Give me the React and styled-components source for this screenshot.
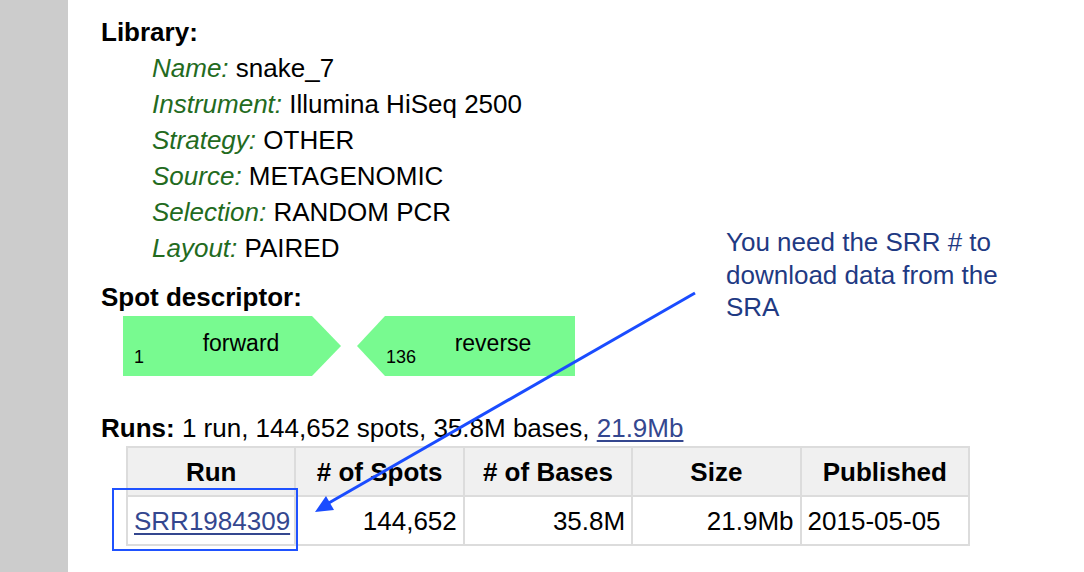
import React from 'react';
import styled, { createGlobalStyle } from 'styled-components';

const GlobalStyle = createGlobalStyle`
  html, body {
    margin: 0;
    padding: 0;
    background: #fff;
  }
  body {
    font-family: 'Liberation Sans', Arial, Helvetica, sans-serif;
    color: #000;
  }
`;

const Page = styled.div`
  position: relative;
  display: flex;
  width: 1084px;
  height: 572px;
  overflow: hidden;
`;

const Sidebar = styled.div`
  width: 68px;
  flex: none;
  background: #cccccc;
`;

const Main = styled.div`
  flex: 1;
  padding: 14px 0 0 33px;
  font-size: 26px;
  line-height: 36px;
`;

const Heading = styled.div`
  font-weight: bold;
  margin-top: ${(p) => p.$gap || 0}px;
`;

const Fields = styled.div`
  padding-left: 51px;
`;

const Field = styled.div`
  white-space: nowrap;
`;

const FieldLabel = styled.em`
  color: #236b1e;
`;

const SpotGraphic = styled.svg`
  display: block;
  margin: 1px 0 34px 22px;
`;

const RunsLine = styled.div`
  white-space: nowrap;
`;

const Link = styled.a`
  color: #34478f;
  text-decoration: underline;
  text-decoration-thickness: 2px;
  text-underline-offset: 3px;
`;

const Table = styled.table`
  margin-left: 25px;
  border-collapse: collapse;
  border: 2px solid #dcdcdc;
  table-layout: fixed;
  width: 844px;
`;

const Th = styled.th`
  height: 47px;
  padding: 0 6px;
  background: #f0f0f0;
  border: 2px solid #dcdcdc;
  font-weight: bold;
  text-align: center;
  line-height: 30px;
`;

const Td = styled.td`
  position: relative;
  height: 47px;
  padding: 0 6px;
  border: 2px solid #dcdcdc;
  text-align: ${(p) => p.$align || 'right'};
  line-height: 30px;
  white-space: nowrap;
`;

const Highlight = styled.div`
  position: absolute;
  left: -16px;
  right: -4px;
  top: -9px;
  bottom: -7px;
  border: 2px solid #1f52ff;
  pointer-events: none;
`;

const Callout = styled.div`
  position: absolute;
  left: 726px;
  top: 226px;
  width: 320px;
  font-size: 26px;
  line-height: 32.5px;
  color: #1f3a83;
`;

const ArrowLayer = styled.svg`
  position: absolute;
  left: 0;
  top: 0;
  pointer-events: none;
`;

const library = [
  ['Name', 'snake_7'],
  ['Instrument', 'Illumina HiSeq 2500'],
  ['Strategy', 'OTHER'],
  ['Source', 'METAGENOMIC'],
  ['Selection', 'RANDOM PCR'],
  ['Layout', 'PAIRED'],
];

const columns = ['Run', '# of Spots', '# of Bases', 'Size', 'Published'];

const SpotDescriptor = () => (
  <SpotGraphic width="460" height="60" viewBox="0 0 460 60">
    <polygon points="0,0 189,0 218,30 189,60 0,60" fill="#78fa90" />
    <polygon points="234,30 262,0 452,0 452,60 262,60" fill="#78fa90" />
    <g fontFamily="'Liberation Sans', Arial, sans-serif" fill="#000">
      <text x="118" y="35" fontSize="23" textAnchor="middle">forward</text>
      <text x="11" y="47" fontSize="18">1</text>
      <text x="370" y="35" fontSize="23" textAnchor="middle">reverse</text>
      <text x="263" y="47" fontSize="18">136</text>
    </g>
  </SpotGraphic>
);

const App = () => (
  <>
    <GlobalStyle />
    <Page>
      <Sidebar />
      <Main>
        <Heading>Library:</Heading>
        <Fields>
          {library.map(([label, value]) => (
            <Field key={label}>
              <FieldLabel>{label}:</FieldLabel> {value}
            </Field>
          ))}
        </Fields>
        <Heading $gap={13}>Spot descriptor:</Heading>
        <SpotDescriptor />
        <RunsLine>
          <b>Runs:</b> 1 run, 144,652 spots, 35.8M bases, <Link href="#">21.9Mb</Link>
        </RunsLine>
        <Table>
          <thead>
            <tr>
              {columns.map((c) => (
                <Th key={c}>{c}</Th>
              ))}
            </tr>
          </thead>
          <tbody>
            <tr>
              <Td $align="left">
                <Link href="#">SRR1984309</Link>
                <Highlight />
              </Td>
              <Td>144,652</Td>
              <Td>35.8M</Td>
              <Td>21.9Mb</Td>
              <Td $align="left">2015-05-05</Td>
            </tr>
          </tbody>
        </Table>
      </Main>

      <Callout>
        You need the SRR # to download data from the SRA
      </Callout>
      <ArrowLayer width="1084" height="572" viewBox="0 0 1084 572">
        <line x1="695" y1="293" x2="327" y2="504" stroke="#1a4cff" strokeWidth="3" />
        <polygon points="315,512 326,496 334,510" fill="#1a4cff" />
      </ArrowLayer>
    </Page>
  </>
);

export default App;
